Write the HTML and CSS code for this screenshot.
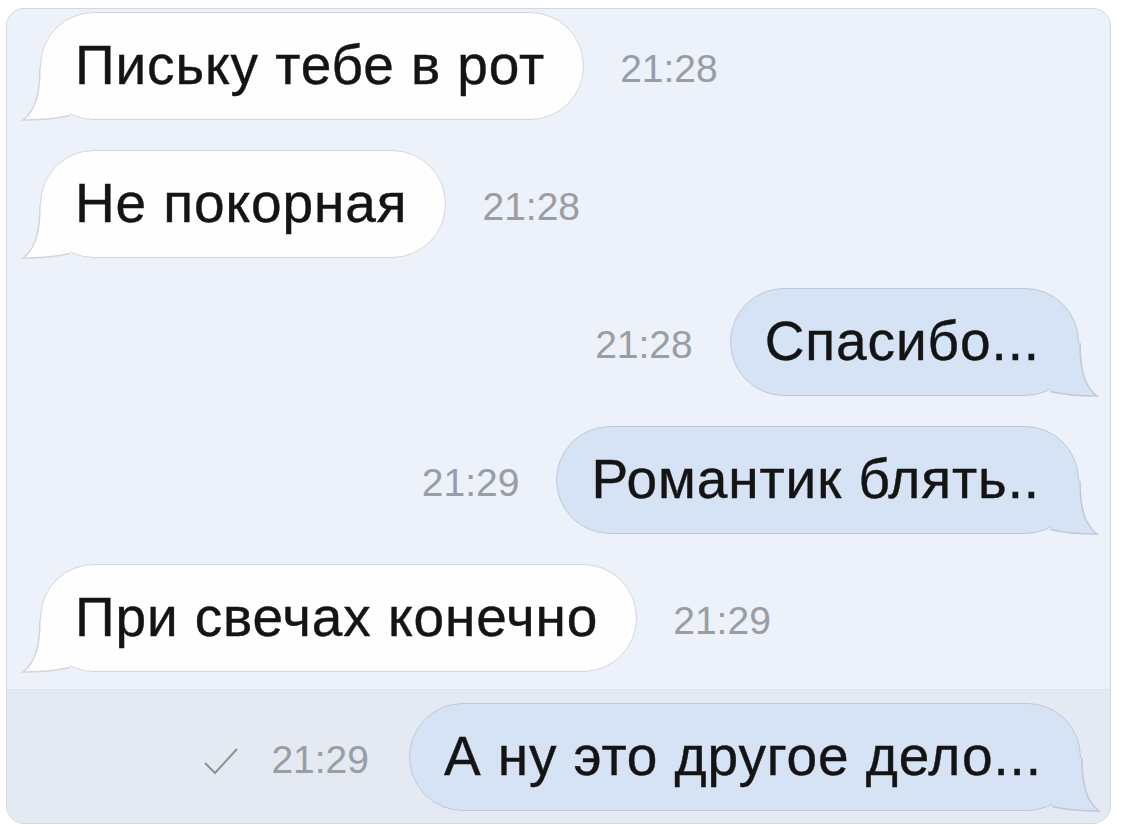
FILE: index.html
```html
<!DOCTYPE html>
<html lang="ru">
<head>
    <meta charset="UTF-8">
    <meta name="viewport" content="width=device-width, initial-scale=1.0">
    <title>Переписка</title>
    <link rel="stylesheet" href="styles.css">
</head>
<body>
    <div class="chat">
        <div class="messages">
            <div class="row in">
                <div class="bubble">Письку тебе в рот
                    <svg class="tail" viewBox="-20 -60 80 64"><path class="tail-fill" d="M0 -54 C0 -26 -5 -10 -17 -1 C-3 -1 14 -2 30 -5.6 L30 -20 L10 -54 Z"/><path class="tail-line" d="M0 -54 C0 -26 -5 -10 -17 -1 C-3 -1 14 -2 30 -5.6"/></svg>
                </div>
                <span class="time">21:28</span>
            </div>
            <div class="row in">
                <div class="bubble">Не покорная
                    <svg class="tail" viewBox="-20 -60 80 64"><path class="tail-fill" d="M0 -54 C0 -26 -5 -10 -17 -1 C-3 -1 14 -2 30 -5.6 L30 -20 L10 -54 Z"/><path class="tail-line" d="M0 -54 C0 -26 -5 -10 -17 -1 C-3 -1 14 -2 30 -5.6"/></svg>
                </div>
                <span class="time">21:28</span>
            </div>
            <div class="row out">
                <span class="time">21:28</span>
                <div class="bubble">Спасибо...
                    <svg class="tail" viewBox="-20 -60 80 64"><path class="tail-fill" d="M0 -54 C0 -26 -5 -10 -17 -1 C-3 -1 14 -2 30 -5.6 L30 -20 L10 -54 Z"/><path class="tail-line" d="M0 -54 C0 -26 -5 -10 -17 -1 C-3 -1 14 -2 30 -5.6"/></svg>
                </div>
            </div>
            <div class="row out">
                <span class="time">21:29</span>
                <div class="bubble">Романтик блять..
                    <svg class="tail" viewBox="-20 -60 80 64"><path class="tail-fill" d="M0 -54 C0 -26 -5 -10 -17 -1 C-3 -1 14 -2 30 -5.6 L30 -20 L10 -54 Z"/><path class="tail-line" d="M0 -54 C0 -26 -5 -10 -17 -1 C-3 -1 14 -2 30 -5.6"/></svg>
                </div>
            </div>
            <div class="row in">
                <div class="bubble">При свечах конечно
                    <svg class="tail" viewBox="-20 -60 80 64"><path class="tail-fill" d="M0 -54 C0 -26 -5 -10 -17 -1 C-3 -1 14 -2 30 -5.6 L30 -20 L10 -54 Z"/><path class="tail-line" d="M0 -54 C0 -26 -5 -10 -17 -1 C-3 -1 14 -2 30 -5.6"/></svg>
                </div>
                <span class="time">21:29</span>
            </div>
        </div>

        <div class="band">
            <div class="row out last">
                <svg class="check" viewBox="0 0 36 28"><path d="M2 16 L12 26 L34 2"/></svg>
                <span class="time">21:29</span>
                <div class="bubble">А ну это другое дело...
                    <svg class="tail" viewBox="-20 -60 80 64"><path class="tail-fill" d="M0 -54 C0 -26 -5 -10 -17 -1 C-3 -1 14 -2 30 -5.6 L30 -20 L10 -54 Z"/><path class="tail-line" d="M0 -54 C0 -26 -5 -10 -17 -1 C-3 -1 14 -2 30 -5.6"/></svg>
                </div>
            </div>
        </div>
    </div>
</body>
</html>
```

FILE: styles.css
```css
* {
    margin: 0;
    padding: 0;
    box-sizing: border-box;
}

body {
    background: #ffffff;
    font-family: "Liberation Sans", Arial, "Noto Sans", sans-serif;
}

.chat {
    margin: 8px 0 0 6px;
    width: 1105px;
    height: 816px;
    border: 1px solid #d3d7de;
    border-radius: 18px;
    background: #edf1f9;
    overflow: hidden;
    display: flex;
    flex-direction: column;
}

.messages {
    padding-top: 3px;
}

.row {
    display: flex;
    align-items: center;
    height: 108px;
    margin-bottom: 30px;
}

.messages .row:last-child {
    margin-bottom: 0;
}

.row.in {
    padding-left: 33px;
    gap: 36px;
}

.row.out {
    justify-content: flex-end;
    padding-right: 31px;
    gap: 37px;
}

.bubble {
    position: relative;
    display: flex;
    align-items: center;
    height: 108px;
    padding: 0 38px 2px 34px;
    border-radius: 54px;
    border: 1.5px solid #d2d6dc;
    background: #fefefe;
    color: #141414;
    font-size: 55px;
    letter-spacing: 0.9px;
    -webkit-text-stroke: 0.4px #141414;
    white-space: nowrap;
}

.out .bubble {
    background: #d5e3f5;
    border-color: #bcc9da;
}

.time {
    font-size: 39px;
    color: #999da4;
    padding-top: 6px;
}

.tail {
    position: absolute;
    left: -21.5px;
    bottom: -5.5px;
    width: 80px;
    height: 64px;
    overflow: visible;
}

.out .tail {
    left: auto;
    right: -21.5px;
    transform: scaleX(-1);
}

.tail-fill {
    fill: #fefefe;
}

.tail-line {
    fill: none;
    stroke: #d2d6dc;
    stroke-width: 1.5;
}

.out .tail-fill {
    fill: #d5e3f5;
}

.out .tail-line {
    stroke: #bcc9da;
}

.band {
    flex: 1;
    margin-top: 17px;
    padding-top: 13px;
    background: #e4e9f2;
    border-top: 1px solid #e0e5ee;
}

.row.last {
    padding-right: 29px;
    gap: 0;
}

.row.last .time {
    margin: 0 40px 0 32px;
}

.check {
    width: 36px;
    height: 28px;
    margin-top: 8px;
}

.check path {
    fill: none;
    stroke: #8d9299;
    stroke-width: 2;
}
```
